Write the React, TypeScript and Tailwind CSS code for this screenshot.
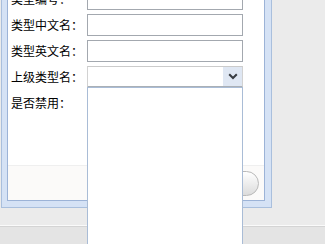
export default function App() {
  const rows = ["类型编号：", "类型中文名：", "类型英文名："];
  return (
    <div className="relative w-[325px] h-[244px] overflow-hidden bg-[#ebebeb] flex flex-col font-['SimSun','Noto_Sans_CJK_SC',sans-serif] text-[12px] text-black">
      <div className="ml-[1px] -mt-[40px] w-[271px] h-[248px] shrink-0 border border-[#a9bfdd] bg-[#d5e2f5] pl-[5px] pr-[6px] pt-[5px] pb-[6px] flex">
        <div className="flex-1 border border-[#9cb3d7] bg-white flex flex-col">
          <div className="flex-1 flex flex-col gap-[4px] pt-[21px] pl-[3px]">
            {rows.map((r) => (
              <div key={r} className="flex items-center h-[22px]">
                <div className="w-[76px] leading-[22px] whitespace-nowrap">{r}</div>
                <div className="w-[156px] h-[22px] border border-[#a3a8af] bg-white" />
              </div>
            ))}
            <div className="flex items-center h-[22px]">
              <div className="w-[76px] leading-[22px] whitespace-nowrap">上级类型名：</div>
              <div className="w-[156px] h-[22px] flex border-t border-l border-r border-t-[#cbcbcb] border-l-[#d2d2d2] border-r-[#d2d2d2] border-b-2 border-b-[#aab0b6] bg-white">
                <div className="flex-1" />
                <div className="w-[19px] bg-[#dfe7f3] flex items-center justify-center">
                  <svg width="10" height="7" viewBox="0 0 10 7">
                    <path d="M1.2 1.2 L5 5 L8.8 1.2" fill="none" stroke="#383c42" strokeWidth="2" />
                  </svg>
                </div>
              </div>
            </div>
            <div className="flex items-center h-[22px]">
              <div className="w-[76px] leading-[22px] whitespace-nowrap">是否禁用：</div>
            </div>
          </div>
          <div className="h-[35px] shrink-0 border-t border-[#efefef] bg-[#fbfaf9] flex items-center justify-end pr-[5px]">
            <button className="w-[80px] h-[25px] rounded-full border border-[#b9b9b9] bg-gradient-to-b from-white to-[#dcdcdc] text-[12px] leading-none">
              关闭
            </button>
          </div>
        </div>
      </div>
      <div className="flex-1" />
      <div className="h-[19px] shrink-0 border-t border-[#fafafa] shadow-[inset_0_1px_0_#d4d4d4] bg-[#e4e4e4]" />
      <div className="absolute left-[87px] top-[87px] w-[156px] h-[170px] border border-[#a9bcd6] bg-white" />
    </div>
  );
}
